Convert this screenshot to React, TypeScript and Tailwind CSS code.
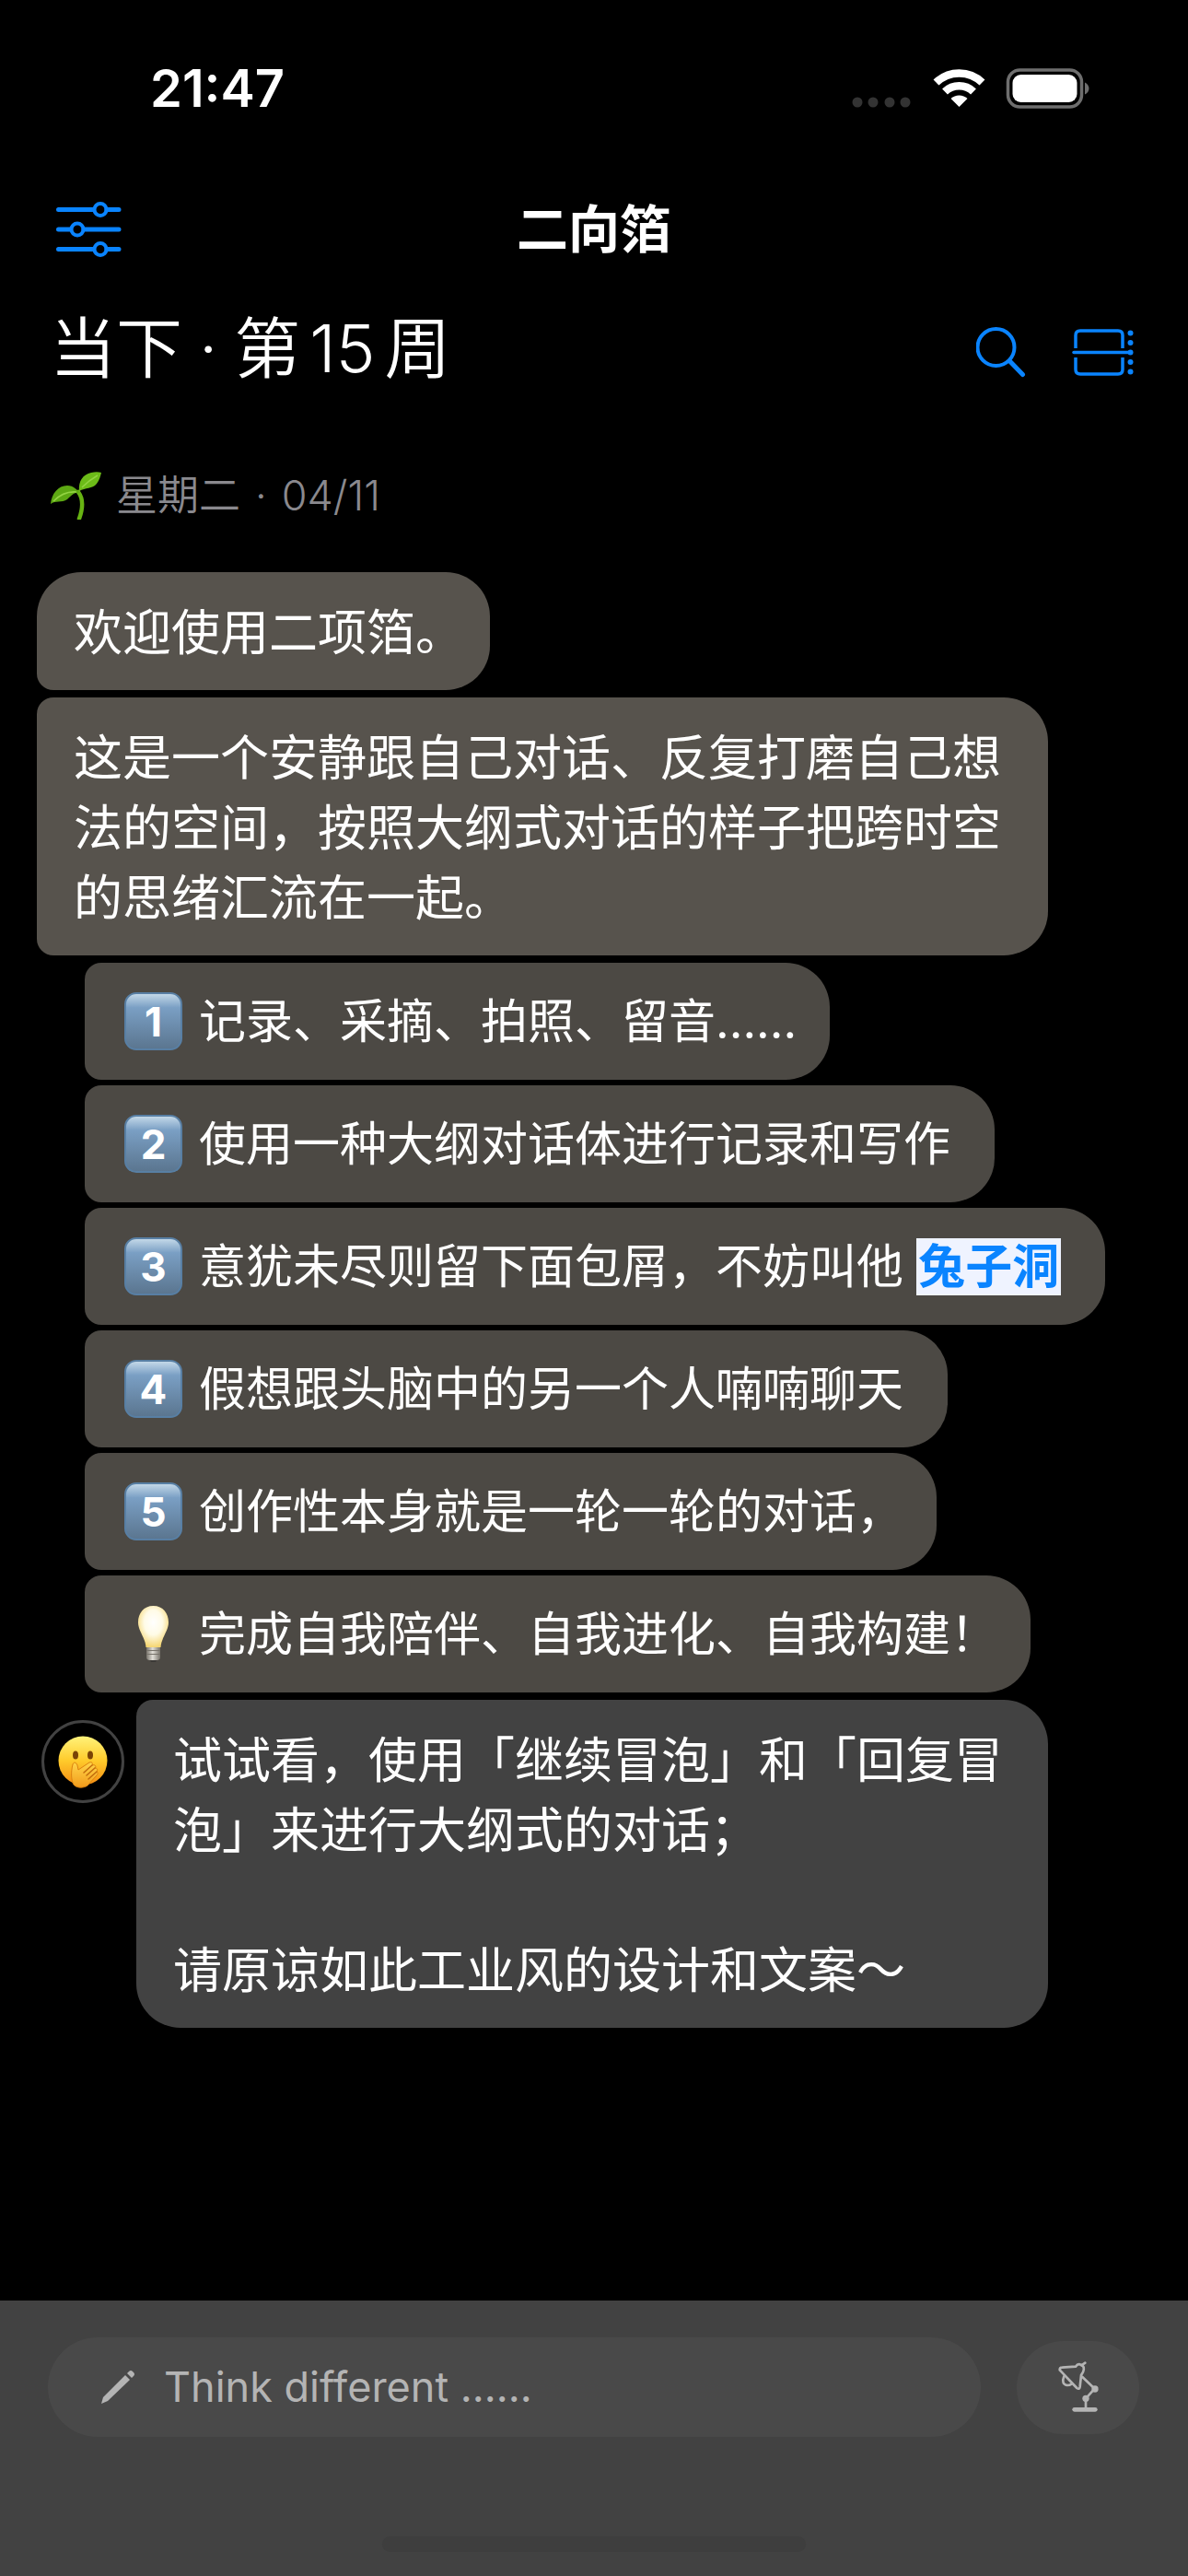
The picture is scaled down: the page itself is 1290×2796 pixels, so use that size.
import { useState, type ReactNode } from "react";
import clsx from "clsx";

type Item = {
	icon: ReactNode;
	text: string;
	link?: string;
	// 以标点结尾时收窄右侧留白
	tight?: boolean;
};

function Keycap({ digit }: { digit: number }) {
	return (
		<span className="flex size-[63px] shrink-0 items-center justify-center rounded-[13px] border-2 border-[#587fa4] bg-linear-to-b from-[#c3d8e8] via-[#7a9fc4] via-25% to-[#5b7690] text-[44px] leading-none font-bold">
			{digit}
		</span>
	);
}

function Bulb() {
	return (
		<svg viewBox="0 0 63 63" className="size-[63px] shrink-0" aria-hidden="true">
			<defs>
				<radialGradient id="glass" cx="0.5" cy="0.4" r="0.6">
					<stop offset="0" stopColor="#ffffff" />
					<stop offset="0.5" stopColor="#fffbe6" />
					<stop offset="1" stopColor="#f5d672" />
				</radialGradient>
				<linearGradient id="metal" x1="0" x2="1">
					<stop offset="0" stopColor="#77736b" />
					<stop offset="0.45" stopColor="#e2dfd8" />
					<stop offset="1" stopColor="#77736b" />
				</linearGradient>
			</defs>
			<path d="M27 58h9l-2 4h-5z" fill="#3b3936" />
			<path d="M24 45h15v12q0 3-4 3h-7q-4 0-4-3z" fill="url(#metal)" />
			<path d="M24 49.500h15M24 53.500h15" stroke="#77736b" strokeWidth="1.200" />
			<path d="M31.500 1C21 1 15 9 15 19c0 9 8 17 8.500 27h16C40 36 48 28 48 19 48 9 42 1 31.500 1z" fill="url(#glass)" />
		</svg>
	);
}

function Sprout() {
	return (
		<svg viewBox="0 0 56 52" className="h-[52px] w-14 shrink-0" aria-hidden="true">
			<path d="M31 22c6 8 5 18 1 29" fill="none" stroke="#67b312" strokeWidth="4.500" strokeLinecap="round" />
			<path d="M1 35C2 24 9 15 19 15c7 0 11 5 14 8-7-1-9 3-14 7-6 4-13 1-18 5z" fill="#5da813" />
			<path d="M32 21C31 10 36 3 45 1c4-1 8-1 11 0-1 4-2 8-5 12-5 6-12 4-19 8z" fill="#6cbb18" />
			<path d="M4 32c7-7 14-11 25-10M35 17c5-5 10-9 17-13" fill="none" stroke="#93d343" strokeWidth="1.500" />
		</svg>
	);
}

function Face() {
	return (
		<svg viewBox="0 0 54 57" className="h-[57px] w-[54px]" aria-hidden="true">
			<defs>
				<linearGradient id="face" x1="0" y1="0" x2="0" y2="1">
					<stop offset="0" stopColor="#fff27a" />
					<stop offset="0.5" stopColor="#ffcb2b" />
					<stop offset="1" stopColor="#f48c13" />
				</linearGradient>
				<linearGradient id="hand" x1="0" y1="0" x2="0" y2="1">
					<stop offset="0" stopColor="#ffd54a" />
					<stop offset="1" stopColor="#f29b1b" />
				</linearGradient>
			</defs>
			<circle cx="27" cy="27" r="26.500" fill="url(#face)" />
			<ellipse cx="19" cy="21" rx="3" ry="4.500" fill="#7a4306" />
			<ellipse cx="35" cy="21" rx="3" ry="4.500" fill="#7a4306" />
			<path
				d="M16 31c1-3 4-2 5 1l1 5 12-8c3-1 4 1 3 3 3-1 5 1 3 3 3 0 3 2 2 4 2 1 1 3 0 4L32 54c-4 3-12 3-15-1-3-5-3-14-1-22z"
				fill="url(#hand)"
				stroke="#dc820f"
				strokeWidth="1"
			/>
			<path d="M37 32l-9 8M40 35l-9 8M42 39l-9 8" fill="none" stroke="#c06b0b" strokeWidth="1.500" strokeLinecap="round" />
		</svg>
	);
}

const ITEMS: Item[] = [
	{ icon: <Keycap digit={1} />, text: "记录、采摘、拍照、留音......", tight: true },
	{ icon: <Keycap digit={2} />, text: "使用一种大纲对话体进行记录和写作" },
	{ icon: <Keycap digit={3} />, text: "意犹未尽则留下面包屑，不妨叫他", link: "兔子洞" },
	{ icon: <Keycap digit={4} />, text: "假想跟头脑中的另一个人喃喃聊天" },
	{ icon: <Keycap digit={5} />, text: "创作性本身就是一轮一轮的对话，", tight: true },
	{ icon: <Bulb />, text: "完成自我陪伴、自我进化、自我构建！", tight: true },
];

function StatusBar() {
	return (
		<div className="flex h-48 items-center justify-between pr-[106px] pl-[163px]">
			<time className="text-[56px] leading-none font-semibold">21:47</time>
			<svg viewBox="0 0 260 44" className="h-11 w-[260px]" aria-hidden="true">
				<g fill="#333333">
					<circle cx="7" cy="37" r="5.500" />
					<circle cx="24" cy="37" r="5.500" />
					<circle cx="42" cy="37" r="5.500" />
					<circle cx="59" cy="37" r="5.500" />
				</g>
				<g fill="none" stroke="#ffffff" strokeWidth="8.500">
					<path d="M92.500 15.500a36 36 0 0 1 50 0" />
					<path d="M102 25.500a22.500 22.500 0 0 1 31 0" />
				</g>
				<path d="M117.500 42l-9-9a13 13 0 0 1 18 0z" fill="#ffffff" />
				<rect x="170.500" y="2" width="80" height="40" rx="13" fill="none" stroke="#6e6e6e" strokeWidth="3.500" />
				<rect x="175.500" y="7" width="70" height="30" rx="9" fill="#ffffff" />
				<path d="M254 15.500c6 3 6 10 0 13z" fill="#6e6e6e" />
			</svg>
		</div>
	);
}

function Header() {
	return (
		<header>
			<div className="grid h-[114px] grid-cols-[1fr_auto_1fr] items-center px-[58px]">
				<button type="button" aria-label="设置" className="justify-self-start">
					<svg viewBox="0 0 76 62" className="h-[62px] w-[76px]" fill="none" stroke="#0a84ff" strokeLinecap="round">
						<path strokeWidth="5" d="M5.500 9.500h38M58 9.500h13M5.500 31h13M33 31h38M5.500 52.500h38M58 52.500h13" />
						<g strokeWidth="4">
							<circle cx="51" cy="9.500" r="6.500" />
							<circle cx="26" cy="31" r="6.500" />
							<circle cx="51" cy="52.500" r="6.500" />
						</g>
					</svg>
				</button>
				<h1 className="text-[56px] leading-none font-semibold">二向箔</h1>
			</div>
			<div className="flex h-[148px] items-center justify-between pr-14 pl-[54px]">
				<h2 className="flex gap-[18px] pb-1 text-[72px] leading-none font-[350]">
					<span>当下</span>
					<span>·</span>
					<span className="flex gap-[10px]">
						<span>第</span>
						<span>15</span>
						<span>周</span>
					</span>
				</h2>
				<div className="flex items-center gap-12 pt-1">
					<button type="button" aria-label="搜索">
						<svg viewBox="0 0 56 56" className="size-14" fill="none" stroke="#0a84ff" strokeLinecap="round">
							<circle cx="21.500" cy="23" r="20" strokeWidth="4" />
							<path d="M36.500 38l14 14.500" strokeWidth="5" />
						</svg>
					</button>
					<button type="button" aria-label="视图">
						<svg viewBox="0 0 70 56" className="h-14 w-[70px]" fill="none" stroke="#0a84ff">
							<path d="M4 24V10q0-5 5-5h41q5 0 5 5v14M4 34v13q0 5 5 5h41q5 0 5-5V34" strokeWidth="3.500" />
							<path d="M2 28.500h60" strokeWidth="3.500" strokeLinecap="round" />
							<g fill="#0a84ff" stroke="none">
								<circle cx="63.500" cy="7.500" r="3" />
								<circle cx="63.500" cy="18" r="3" />
								<circle cx="63.500" cy="28.500" r="3" />
								<circle cx="63.500" cy="39" r="3" />
								<circle cx="63.500" cy="49.500" r="3" />
							</g>
						</svg>
					</button>
				</div>
			</div>
		</header>
	);
}

function Composer() {
	const [value, setValue] = useState("");

	return (
		<footer className="mt-auto bg-[#424242] pt-10 pb-[26px]">
			<div className="flex items-center gap-[39px] pr-[53px] pl-[52px]">
				<label className="flex h-[108px] grow items-center gap-[30px] rounded-full bg-[#494949] pl-14">
					<svg viewBox="0 0 40 40" className="size-10 shrink-0" fill="#b4b4b4" aria-hidden="true">
						<path d="M2 38l2-7L28 7l5 5L9 35z" />
						<path d="M30 5l2-2q2-2 4 0l1 1q2 2 0 4l-2 2z" />
					</svg>
					<input
						type="text"
						aria-label="Think different"
						placeholder="Think different ......"
						value={value}
						onChange={(e) => setValue(e.target.value)}
						className="w-full min-w-0 bg-transparent text-[45px] text-white outline-none placeholder:text-[#b4b4b4]"
					/>
				</label>
				<button type="button" aria-label="台灯" className="flex h-[101px] w-[133px] shrink-0 items-center justify-center rounded-full bg-[#494949]">
					<svg viewBox="322 250 144 174" className="h-[58px] w-12" fill="none" stroke="#b4b4b4" strokeWidth="8" strokeLinejoin="round" strokeLinecap="round">
						<path d="M333 281q0-8 8-8l44-3q6-9 14-7 8 1 12 9 2 8-2 16l-6 10-4 38q-2 10-10 4z" />
						<path d="M404 266l12-8M347 302q-10 25 10 29 9 0 14-4M407 304l40 38-29 32v32" />
						<path d="M381 410h68" strokeWidth="14" />
						<g fill="#b4b4b4" stroke="none">
							<circle cx="448" cy="343" r="11" />
							<circle cx="418" cy="374" r="11" />
						</g>
					</svg>
				</button>
			</div>
			<div className="mx-auto mt-[108px] h-[17px] w-[460px] rounded-full bg-[#3e3e3e]" />
		</footer>
	);
}

export default function App() {
	return (
		<div lang="zh-CN" className="flex min-h-screen flex-col bg-black font-['Inter','Noto_Sans_CJK_SC',sans-serif] text-white">
			<StatusBar />
			<Header />
			<main>
				<div className="flex h-[167px] items-center gap-4 pl-[54px] text-[#8a898e]">
					<Sprout />
					<div className="flex gap-4 text-[45px] leading-none font-[350]">
						<span>星期二</span>
						<span>·</span>
						<time>04/11</time>
					</div>
				</div>

				<div className="flex flex-col items-start gap-2 px-10 text-[53px] leading-[76px]">
					<p className="rounded-[48px] rounded-bl-[18px] bg-[#57534d] pt-7 pr-7 pb-6 pl-10">欢迎使用二项箔。</p>
					<p className="max-w-[1098px] rounded-l-[18px] rounded-r-[48px] bg-[#57534d] px-10 pt-7 pb-6">
						这是一个安静跟自己对话、反复打磨自己想法的空间，按照大纲式对话的样子把跨时空的思绪汇流在一起。
					</p>

					<ul className="ml-[52px] flex flex-col items-start gap-[6px] text-[51px] leading-[75px]">
						{ITEMS.map((item) => (
							<li
								key={item.text}
								className={clsx(
									"flex items-center gap-[18px] rounded-l-[18px] rounded-r-[48px] bg-[#4c4944] py-[26px] pl-[43px]",
									item.tight ? "pr-9" : "pr-12"
								)}
							>
								{item.icon}
								<span className="whitespace-nowrap">
									{item.text}
									{item.link && (
										<>
											{" "}
											<a href="#rabbit-hole" className="inline-block bg-[#eff3ff] px-[2px] leading-[62px] font-semibold text-[#0a84ff]">
												{item.link}
											</a>
										</>
									)}
								</span>
							</li>
						))}
					</ul>

					{/* 对方的回复 */}
					<div className="flex items-start gap-[13px] pl-[5px]">
						<div className="mt-[22px] flex size-[90px] shrink-0 items-center justify-center rounded-full border-3 border-[#424242]">
							<Face />
						</div>
						<div className="max-w-[990px] rounded-[48px] rounded-tl-[18px] bg-[#424242] px-10 pt-7 pb-6">
							<p>试试看，使用「继续冒泡」和「回复冒泡」来进行大纲式的对话；</p>
							<p className="mt-[76px]">请原谅如此工业风的设计和文案～</p>
						</div>
					</div>
				</div>
			</main>
			<Composer />
		</div>
	);
}
